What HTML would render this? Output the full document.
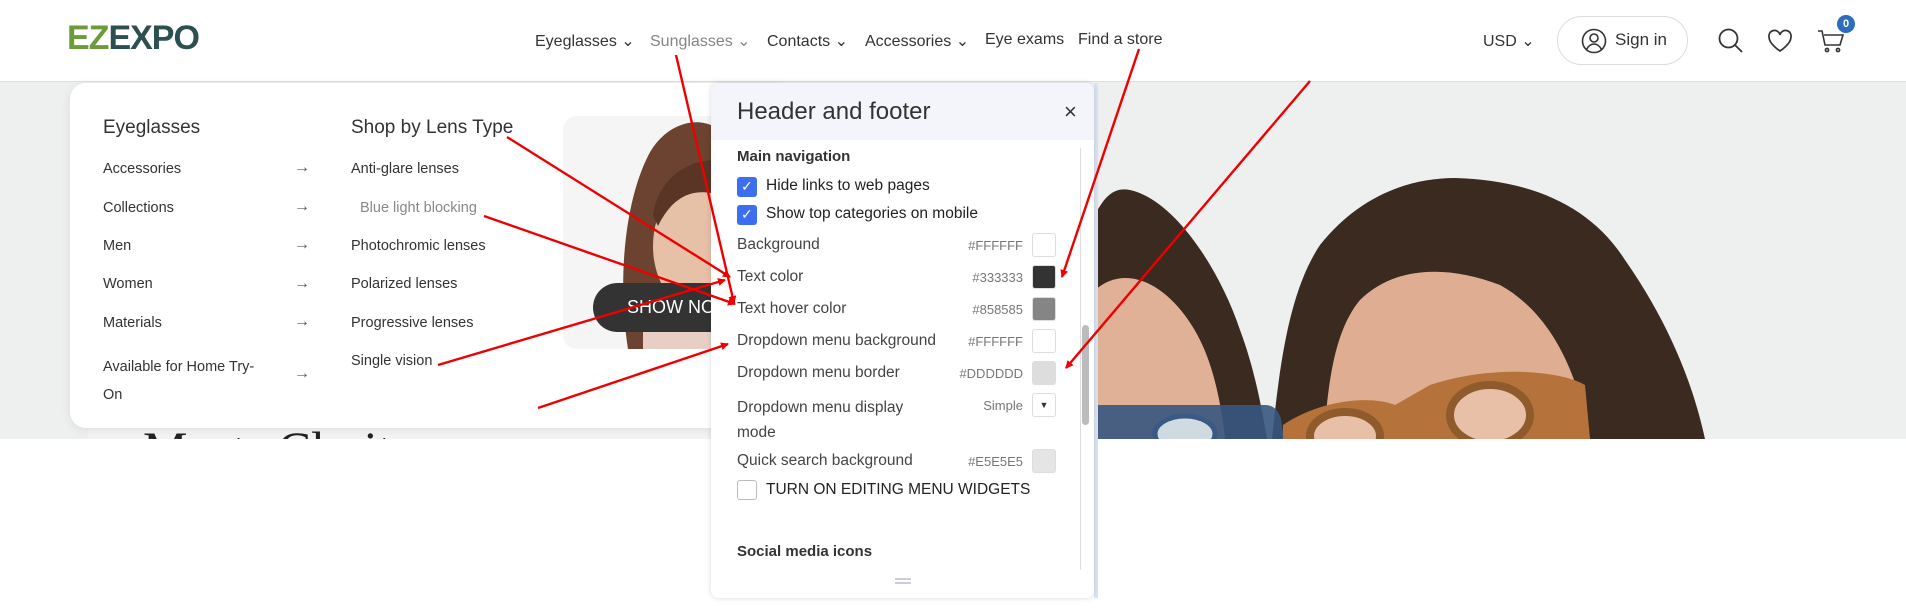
<!DOCTYPE html>
<html><head><meta charset="utf-8"><style>
*{box-sizing:border-box;margin:0;padding:0}
body{width:1906px;height:616px;overflow:hidden;background:#fff;font-family:"Liberation Sans",sans-serif;color:#333;position:relative}
.abs{position:absolute}
.nav span{position:absolute;top:31px;font-size:16px;color:#333;white-space:nowrap}
.dd .it{position:absolute;font-size:14.5px;color:#333;white-space:nowrap}
.dd .ar{position:absolute;left:224px;font-size:16px;color:#555}
.pn .lb{position:absolute;left:26px;font-size:15.5px;color:#444;white-space:nowrap}
.pn .hx{position:absolute;right:71px;font-size:13px;color:#777;text-align:right}
.pn .sw{position:absolute;left:321px;width:24px;height:24px;border:1px solid #ddd;border-radius:3px}
.cb{position:absolute;left:26px;width:20px;height:20px;border-radius:3px;background:#3b6ff0}
</style></head><body>
<!-- header -->
<div class="abs" style="left:0;top:0;width:1906px;height:82px;background:#fff;border-bottom:1px solid #ddd"></div>
<div class="abs" style="left:67px;top:20px;font-size:34px;font-weight:bold;letter-spacing:-1px;line-height:36px"><span style="color:#6d9a3a">EZ</span><span style="color:#2c4f4f">EXPO</span></div>
<div class="nav">
<span style="left:535px">Eyeglasses ⌄</span>
<span style="left:650px;color:#858585">Sunglasses ⌄</span>
<span style="left:767px">Contacts ⌄</span>
<span style="left:865px">Accessories ⌄</span>
<span style="left:985px">Eye exams</span>
<span style="left:1078px">Find a store</span>
</div>
<div class="abs" style="left:1483px;top:31px;font-size:16px">USD ⌄</div>
<div class="abs" style="left:1557px;top:16px;width:131px;height:49px;border:1px solid #ddd;border-radius:25px"></div>
<svg class="abs" style="left:1581px;top:28px" width="26" height="26" viewBox="0 0 26 26" fill="none" stroke="#333" stroke-width="1.6"><circle cx="13" cy="13" r="11.5"/><circle cx="13" cy="10" r="4"/><path d="M5.5 21.5c2-4 4.5-5.5 7.5-5.5s5.5 1.5 7.5 5.5"/></svg>
<div class="abs" style="left:1615px;top:30px;font-size:17px">Sign in</div>
<svg class="abs" style="left:1717px;top:27px" width="28" height="28" viewBox="0 0 28 28" fill="none" stroke="#333" stroke-width="1.8"><circle cx="11.5" cy="11.5" r="9"/><path d="M18 18l7 7"/></svg>
<svg class="abs" style="left:1767px;top:29px" width="26" height="24" viewBox="0 0 26 24" fill="none" stroke="#333" stroke-width="1.7"><path d="M13 22S2 15 2 8a5.5 5.5 0 0 1 11-2 5.5 5.5 0 0 1 11 2c0 7-11 14-11 14z"/></svg>
<svg class="abs" style="left:1817px;top:29px" width="28" height="26" viewBox="0 0 28 26" fill="none" stroke="#333" stroke-width="1.6"><path d="M1 2h4l3 14h15l3-10H7"/><circle cx="10" cy="21" r="1.6"/><circle cx="21" cy="21" r="1.6"/></svg>
<div class="abs" style="left:1837px;top:15px;width:18px;height:18px;border-radius:50%;background:#2e6dbb;color:#fff;font-size:11px;font-weight:bold;text-align:center;line-height:18px">0</div>

<!-- hero -->
<div class="abs" style="left:0;top:82px;width:1906px;height:357px;background:#eef0f0;overflow:hidden">
 <div class="abs" style="left:88px;top:0;width:1010px;height:357px;background:#f3f3f3"></div>
 <div class="abs" style="left:143px;top:338px;font-family:'Liberation Serif',serif;font-size:50px;color:#222">Meets Clarity</div>
 <svg class="abs" style="left:1095px;top:0" width="811" height="357" viewBox="1095 82 811 357">
  <path d="M1095 215 C1105 195 1115 187 1130 190 C1175 200 1220 270 1240 330 C1255 370 1262 410 1267 439 L1095 439Z" fill="#3a2a20"/>
  <path d="M1095 290 C1130 260 1175 290 1200 340 C1215 370 1222 410 1225 439 L1095 439Z" fill="#e0b196"/>
  <path d="M1272 439 C1280 360 1290 290 1320 245 C1360 195 1410 178 1455 178 C1530 180 1590 205 1625 260 C1660 310 1690 370 1705 439Z" fill="#3b2a1f"/>
  <path d="M1324 439 C1328 380 1335 330 1360 300 C1390 270 1440 262 1500 285 C1545 310 1575 360 1590 439Z" fill="#dfad91"/>
  <path d="M1095 405 h170 q12 0 16 14 l3 20 h-189z" fill="#37577f" opacity=".9"/>
  <ellipse cx="1185" cy="434" rx="30" ry="18" fill="#cfdbe0" stroke="#3a5a85" stroke-width="5"/>
  <path d="M1283 425 C1320 400 1370 395 1395 405 L1430 385 C1490 365 1560 370 1585 385 L1590 439 L1283 439Z" fill="#b5733b"/>
  <ellipse cx="1490" cy="415" rx="40" ry="30" fill="#e8c0a8" stroke="#8f5a2c" stroke-width="8"/>
  <ellipse cx="1345" cy="436" rx="35" ry="24" fill="#e8c0a8" stroke="#8f5a2c" stroke-width="8"/>
 </svg>
</div>

<!-- dropdown card -->
<div class="abs dd" style="left:70px;top:83px;width:720px;height:345px;background:#fff;border-radius:16px;box-shadow:0 2px 10px rgba(0,0,0,.08)">
 <div class="it" style="left:33px;top:34px;font-size:19px">Eyeglasses</div>
 <div class="it" style="left:281px;top:34px;font-size:19px">Shop by Lens Type</div>
 <div class="it" style="left:33px;top:78px">Accessories</div><div class="ar" style="top:76px">→</div>
 <div class="it" style="left:33px;top:117px">Collections</div><div class="ar" style="top:115px">→</div>
 <div class="it" style="left:33px;top:155px">Men</div><div class="ar" style="top:153px">→</div>
 <div class="it" style="left:33px;top:193px">Women</div><div class="ar" style="top:192px">→</div>
 <div class="it" style="left:33px;top:232px">Materials</div><div class="ar" style="top:230px">→</div>
 <div class="it" style="left:33px;top:270px;line-height:28px">Available for Home Try-<br>On</div><div class="ar" style="top:282px">→</div>
 <div class="it" style="left:281px;top:78px">Anti-glare lenses</div>
 <div class="it" style="left:290px;top:117px;color:#888">Blue light blocking</div>
 <div class="it" style="left:281px;top:155px">Photochromic lenses</div>
 <div class="it" style="left:281px;top:193px">Polarized lenses</div>
 <div class="it" style="left:281px;top:232px">Progressive lenses</div>
 <div class="it" style="left:281px;top:270px">Single vision</div>
 <div class="abs" style="left:493px;top:33px;width:230px;height:233px;background:#f5f5f5;border-radius:14px;overflow:hidden">
  <svg class="abs" style="left:0;top:0" width="230" height="233" viewBox="0 0 230 233">
   <path d="M65 233 C55 170 60 90 85 40 C100 10 130 0 150 10 L160 233Z" fill="#6b4330"/>
   <ellipse cx="140" cy="130" rx="50" ry="68" fill="#e7c0a8"/>
   <path d="M90 100 C95 60 130 40 160 45 L160 80 C130 70 110 80 95 110Z" fill="#5a3525"/>
   <path d="M80 200 h100 v33 h-100z" fill="#e8cfc6"/>
  </svg>
 </div>
 <div class="abs" style="left:523px;top:200px;width:200px;height:49px;border-radius:25px;background:#333;color:#fff;font-size:18px;line-height:49px;padding-left:34px">SHOW NOW</div>
</div>

<!-- panel -->
<div class="abs" style="left:1094px;top:83px;width:4px;height:515px;background:#dbe4f3"></div>
<div class="abs pn" style="left:711px;top:83px;width:383px;height:515px;background:#fff;border-radius:8px;box-shadow:0 0 6px rgba(0,0,0,.15);overflow:hidden">
 <div class="abs" style="left:0;top:0;width:383px;height:57px;background:#f3f5fa"></div>
 <div class="abs" style="left:26px;top:15px;font-size:24px;color:#333">Header and footer</div>
 <div class="abs" style="left:353px;top:16px;font-size:22px;color:#333">×</div>
 <div class="abs" style="left:26px;top:65px;font-size:15px;font-weight:bold;color:#333">Main navigation</div>
 <div class="cb" style="top:94px"></div><div class="abs" style="left:30px;top:95px;color:#fff;font-size:14px">✓</div>
 <div class="lb" style="left:55px;top:94px;color:#222">Hide links to web pages</div>
 <div class="cb" style="top:122px"></div><div class="abs" style="left:30px;top:123px;color:#fff;font-size:14px">✓</div>
 <div class="lb" style="left:55px;top:122px;color:#222">Show top categories on mobile</div>
 <div class="lb" style="top:153px">Background</div><div class="hx" style="top:155px">#FFFFFF</div><div class="sw" style="top:150px;background:#fff"></div>
 <div class="lb" style="top:185px">Text color</div><div class="hx" style="top:187px">#333333</div><div class="sw" style="top:182px;background:#333"></div>
 <div class="lb" style="top:217px">Text hover color</div><div class="hx" style="top:219px">#858585</div><div class="sw" style="top:214px;background:#858585"></div>
 <div class="lb" style="top:249px">Dropdown menu background</div><div class="hx" style="top:251px">#FFFFFF</div><div class="sw" style="top:246px;background:#fff"></div>
 <div class="lb" style="top:281px">Dropdown menu border</div><div class="hx" style="top:283px">#DDDDDD</div><div class="sw" style="top:278px;background:#ddd"></div>
 <div class="lb" style="top:312px;line-height:25px">Dropdown menu display<br>mode</div><div class="hx" style="top:315px">Simple</div><div class="sw" style="top:310px;background:#fff;font-size:9px;text-align:center;line-height:22px">▼</div>
 <div class="lb" style="top:369px">Quick search background</div><div class="hx" style="top:371px">#E5E5E5</div><div class="sw" style="top:366px;background:#e5e5e5"></div>
 <div class="abs" style="left:26px;top:397px;width:20px;height:20px;border:1px solid #bbb;border-radius:3px"></div>
 <div class="lb" style="left:55px;top:398px;color:#222">TURN ON EDITING MENU WIDGETS</div>
 <div class="abs" style="left:26px;top:460px;font-size:15px;font-weight:bold;color:#333">Social media icons</div>
 <div class="abs" style="left:369px;top:65px;width:1px;height:422px;background:#ddd"></div>
 <div class="abs" style="left:371px;top:242px;width:7px;height:100px;background:#bbb;border-radius:4px"></div>
 <div class="abs" style="left:184px;top:495px;width:16px;height:2px;background:#ccd;box-shadow:0 4px 0 #ccd"></div>
</div>

<!-- arrows -->
<svg class="abs" style="left:0;top:0" width="1906" height="616">
 <defs><marker id="a" markerWidth="8" markerHeight="8" refX="7" refY="4" orient="auto" markerUnits="userSpaceOnUse" viewBox="0 0 8 8"><path d="M0 0L8 4L0 8z" fill="#e00"/></marker></defs>
 <g stroke="#e00" stroke-width="2.4" fill="none" marker-end="url(#a)">
 <path d="M676 55L734 303"/>
 <path d="M1139 49L1062 277"/>
 <path d="M1310 81L1066 368"/>
 <path d="M507 137L730 277"/>
 <path d="M484 216L735 304"/>
 <path d="M438 365L725 280"/>
 <path d="M538 408L728 344"/>
 </g>
</svg>
</body></html>
